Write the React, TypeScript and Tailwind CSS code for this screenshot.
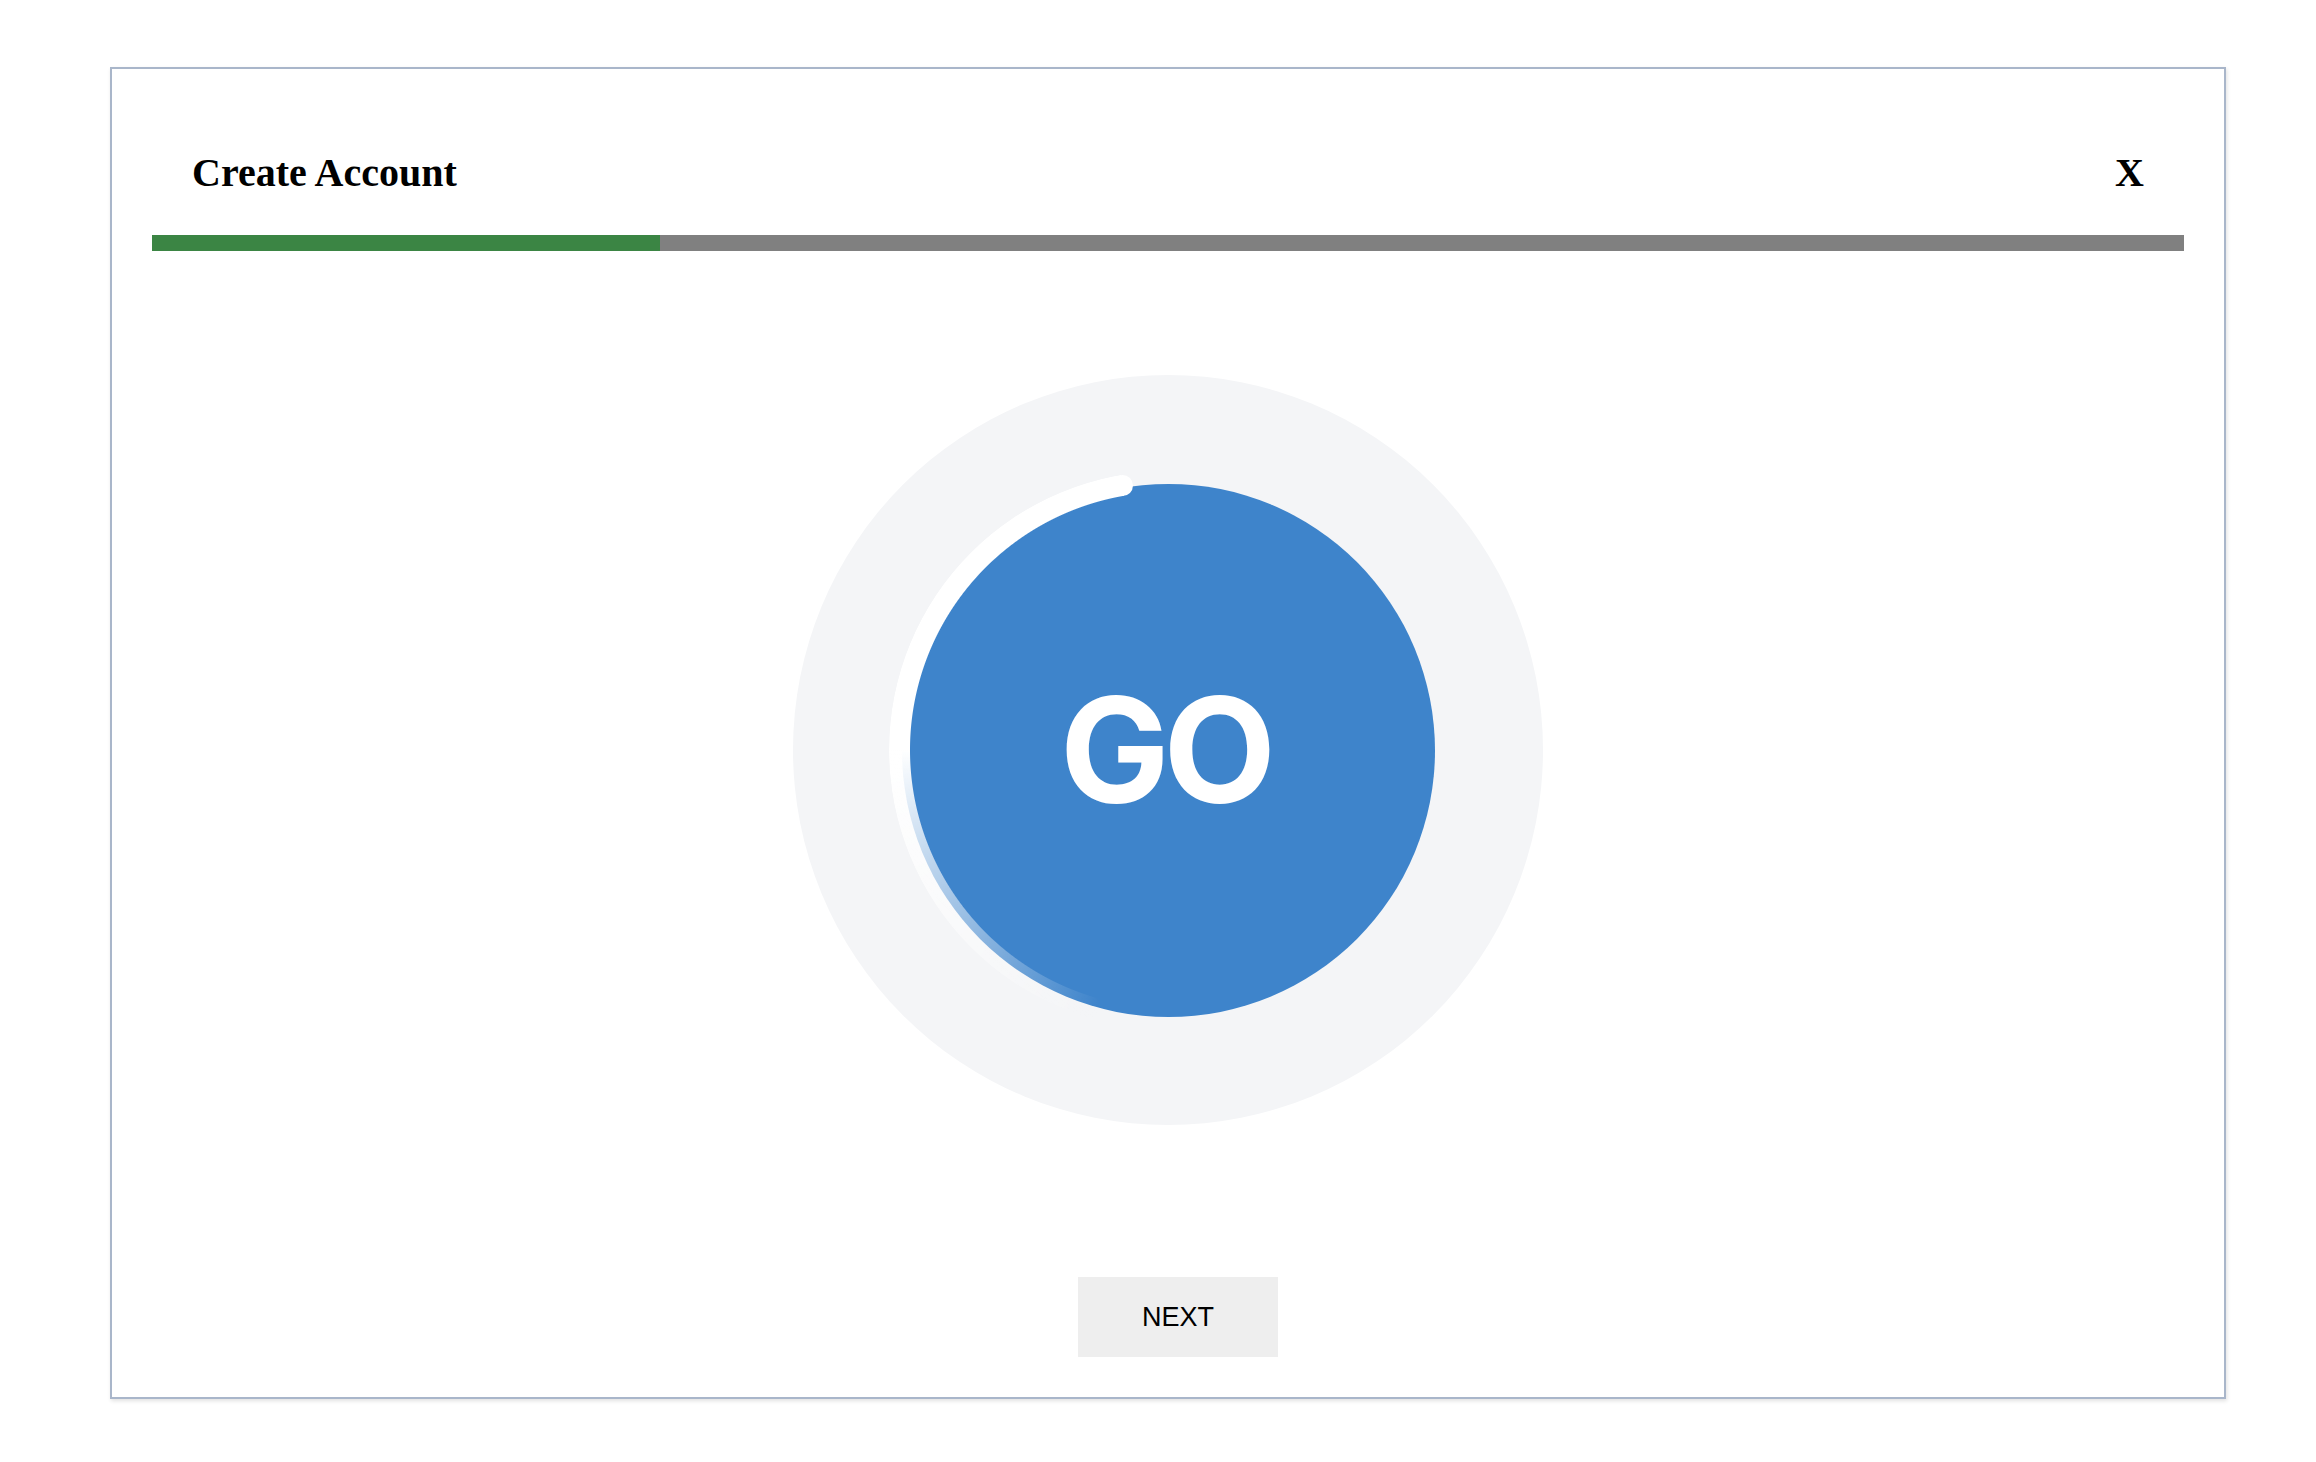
export default function App() {
  return (
    <div className="min-h-screen bg-white pt-[67px] pl-[110px]">
      <div className="w-[2116px] border-2 border-[#a9b6ca] bg-white p-10 shadow-[1px_2px_4px_rgba(0,0,0,0.12)]">
        {/* Header */}
        <div className="flex items-center justify-between px-10 pt-[41px] pb-[39px] font-['Liberation_Serif',serif] text-[40px] font-bold leading-[46px] text-black">
          <h2>Create Account</h2>
          <button className="cursor-pointer">X</button>
        </div>

        {/* Step progress */}
        <div className="flex h-4 w-full bg-[#808080]">
          <div className="h-full w-1/4 bg-[#3b8544]" />
        </div>

        {/* GO dial */}
        <div className="mt-[124px] flex justify-center">
          <div className="flex h-[750px] w-[750px] items-center justify-center rounded-full bg-[#f4f5f7]">
            <div className="relative flex h-[533px] w-[533px] items-center justify-center rounded-full bg-[#3e84cb]">
              <div className="absolute -inset-[12.5px] rounded-full [background-image:conic-gradient(rgba(255,255,255,0)_0deg_195deg,#ffffff_270deg_350.25deg,rgba(255,255,255,0)_350.25deg)] [mask-image:radial-gradient(circle_closest-side,transparent_257.5px,black_258.5px)]" />
              <div className="absolute left-[210.5px] top-[-8.5px] h-[21px] w-[21px] rounded-full bg-white" />
              <span className="relative pr-[6px] font-['Inter',sans-serif] text-[146px] font-bold leading-none tracking-[-6px] text-white">
                GO
              </span>
            </div>
          </div>
        </div>

        {/* Footer */}
        <div className="mt-[152px] flex justify-center pl-[20px]">
          <button className="flex h-20 w-[200px] items-center justify-center bg-[#eeeeee] font-['Liberation_Sans',Arial,sans-serif] text-[27px] text-black">
            NEXT
          </button>
        </div>
      </div>
    </div>
  );
}
